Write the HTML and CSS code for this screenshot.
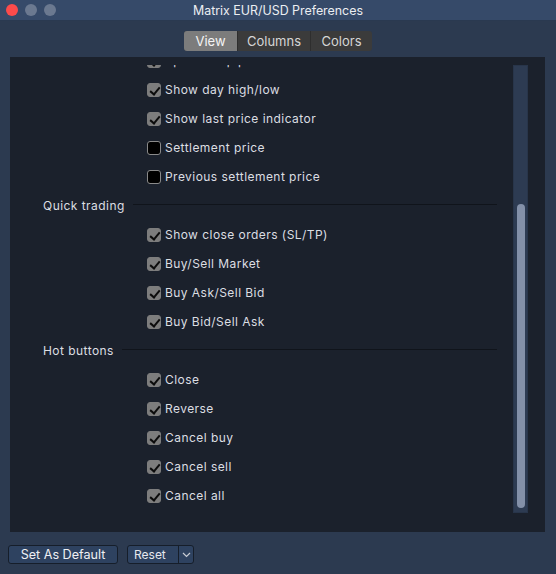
FILE: index.html
```html
<!DOCTYPE html>
<html>
<head>
<meta charset="utf-8">
<link rel="stylesheet" href="styles.css">
</head>
<body>
<div class="window">
  <div class="titlebar">
    <div class="lights">
      <span class="light red"></span>
      <span class="light gray"></span>
      <span class="light gray"></span>
    </div>
    <div class="title">Matrix EUR/USD Preferences</div>
  </div>
  <div class="tabs-row">
    <div class="tabs">
      <div class="tab active tab-view">View</div>
      <div class="tab tab-columns">Columns</div>
      <div class="tab tab-colors">Colors</div>
    </div>
  </div>
  <div class="panel">
    <div class="viewport">
      <div class="content">
        <div class="row"><span class="cb on"></span><span class="label">Spread in pips</span></div>
        <div class="row"><span class="cb on"></span><span class="label">Show day high/low</span></div>
        <div class="row"><span class="cb on"></span><span class="label">Show last price indicator</span></div>
        <div class="row"><span class="cb"></span><span class="label">Settlement price</span></div>
        <div class="row"><span class="cb"></span><span class="label">Previous settlement price</span></div>
        <div class="section"><span class="section-title">Quick trading</span><span class="rule"></span></div>
        <div class="row"><span class="cb on"></span><span class="label">Show close orders (SL/TP)</span></div>
        <div class="row"><span class="cb on"></span><span class="label">Buy/Sell Market</span></div>
        <div class="row"><span class="cb on"></span><span class="label">Buy Ask/Sell Bid</span></div>
        <div class="row"><span class="cb on"></span><span class="label">Buy Bid/Sell Ask</span></div>
        <div class="section"><span class="section-title">Hot buttons</span><span class="rule"></span></div>
        <div class="row"><span class="cb on"></span><span class="label">Close</span></div>
        <div class="row"><span class="cb on"></span><span class="label">Reverse</span></div>
        <div class="row"><span class="cb on"></span><span class="label">Cancel buy</span></div>
        <div class="row"><span class="cb on"></span><span class="label">Cancel sell</span></div>
        <div class="row"><span class="cb on"></span><span class="label">Cancel all</span></div>
      </div>
    </div>
    <div class="track"><div class="thumb"></div></div>
  </div>
  <div class="footer">
    <button class="btn default-btn">Set As Default</button>
    <div class="split">
      <span class="split-main">Reset</span>
      <span class="split-arrow"><svg width="9" height="6" viewBox="0 0 9 6"><path d="M1 1 L4.5 4.5 L8 1" fill="none" stroke="#c8ccd4" stroke-width="1.2"/></svg></span>
    </div>
  </div>
</div>
</body>
</html>
```
FILE: styles.css
```css
* { box-sizing: border-box; }
html, body { margin: 0; padding: 0; }
body {
  width: 556px;
  height: 574px;
  overflow: hidden;
  background: #2c3a50;
  font-family: "Inter", "Liberation Sans", sans-serif;
  color: #d9dbe0;
}
.window {
  width: 556px;
  height: 574px;
  display: flex;
  flex-direction: column;
}
.titlebar {
  height: 21px;
  background: #364a69;
  border-bottom: 1px solid #2a3950;
  display: flex;
  align-items: center;
  position: relative;
}
.lights {
  display: flex;
  gap: 7px;
  padding-left: 6px;
}
.light {
  width: 12px;
  height: 12px;
  border-radius: 50%;
  display: block;
}
.light.red { background: #fc4b4b; }
.light.gray { background: #6b7990; }
.title {
  position: absolute;
  left: 0;
  right: 0;
  text-align: center;
  font-size: 12.4px;
  color: #eceef2;
  top: 3px;
}
.tabs-row {
  height: 36px;
  display: flex;
  justify-content: flex-start;
  padding-left: 184px;
  padding-top: 10px;
}
.tabs {
  display: flex;
  height: 20px;
  border-radius: 3px;
  overflow: hidden;
  background: #3b3b3b;
}
.tab {
  font-size: 13px;
  color: #d6d6d6;
  display: flex;
  align-items: center;
  justify-content: center;
  height: 20px;
}
.tab + .tab { border-left: 1px solid #2e2e2e; }
.tab.active { background: #7c7c7c; color: #f4f4f4; }
.tab-view { width: 53px; }
.tab-columns { width: 73px; }
.tab-colors { width: 62px; }
.panel {
  margin-left: 10px;
  width: 535px;
  height: 475px;
  background: #1b212c;
  display: flex;
  padding-top: 8px;
}
.viewport {
  width: 503px;
  height: 448px;
  overflow: hidden;
}
.content {
  margin-top: -19px;
}
.row {
  height: 29px;
  display: flex;
  align-items: center;
  padding-left: 137px;
}
.cb {
  width: 14px;
  height: 14px;
  border-radius: 3px;
  background: #000;
  border: 1px solid #8a8a8a;
  margin-right: 4px;
  flex: none;
  display: block;
  position: relative;
}
.cb.on {
  background: #7d7d7d;
  border-color: #7d7d7d;
}
.cb.on::after {
  content: "";
  position: absolute;
  left: 4px;
  top: 1px;
  width: 4px;
  height: 8px;
  border-right: 2px solid #0c0c0c;
  border-bottom: 2px solid #0c0c0c;
  transform: rotate(40deg);
}
.label {
  font-size: 12px;
  letter-spacing: 0.45px;
  color: #dcdee2;
}
.section {
  height: 29px;
  display: flex;
  align-items: center;
  padding-left: 33px;
  padding-right: 16px;
}
.section-title {
  font-size: 12px;
  letter-spacing: 0.45px;
  color: #dcdee2;
  margin-right: 8px;
}
.rule {
  flex: 1;
  height: 1px;
  background: #10141b;
  margin-top: -2px;
}
.track {
  width: 15px;
  height: 448px;
  background: #2d3b52;
  border: 1px solid #28354a;
  display: flex;
  align-items: flex-end;
  justify-content: center;
  padding-bottom: 4px;
}
.thumb {
  width: 8px;
  height: 304px;
  border-radius: 4px;
  background: #8390a8;
}
.footer {
  display: flex;
  align-items: center;
  padding-left: 8px;
  padding-top: 13px;
  gap: 9px;
}
.btn {
  font-family: inherit;
  height: 19px;
  border: 1px solid #161e2a;
  border-radius: 3px;
  background: #2e4260;
  color: #eef0f4;
  padding: 0;
}
.default-btn {
  width: 110px;
  font-size: 12.6px;
}
.split {
  display: flex;
  height: 19px;
  width: 67px;
  border: 1px solid #161e2a;
  border-radius: 3px;
  background: #2e4260;
}
.split-main {
  width: 51px;
  font-size: 12px;
  display: flex;
  align-items: center;
  padding-left: 6px;
  color: #e6e8ee;
  border-right: 1px solid #161e2a;
}
.split-arrow {
  flex: 1;
  display: flex;
  align-items: center;
  justify-content: center;
}
```
